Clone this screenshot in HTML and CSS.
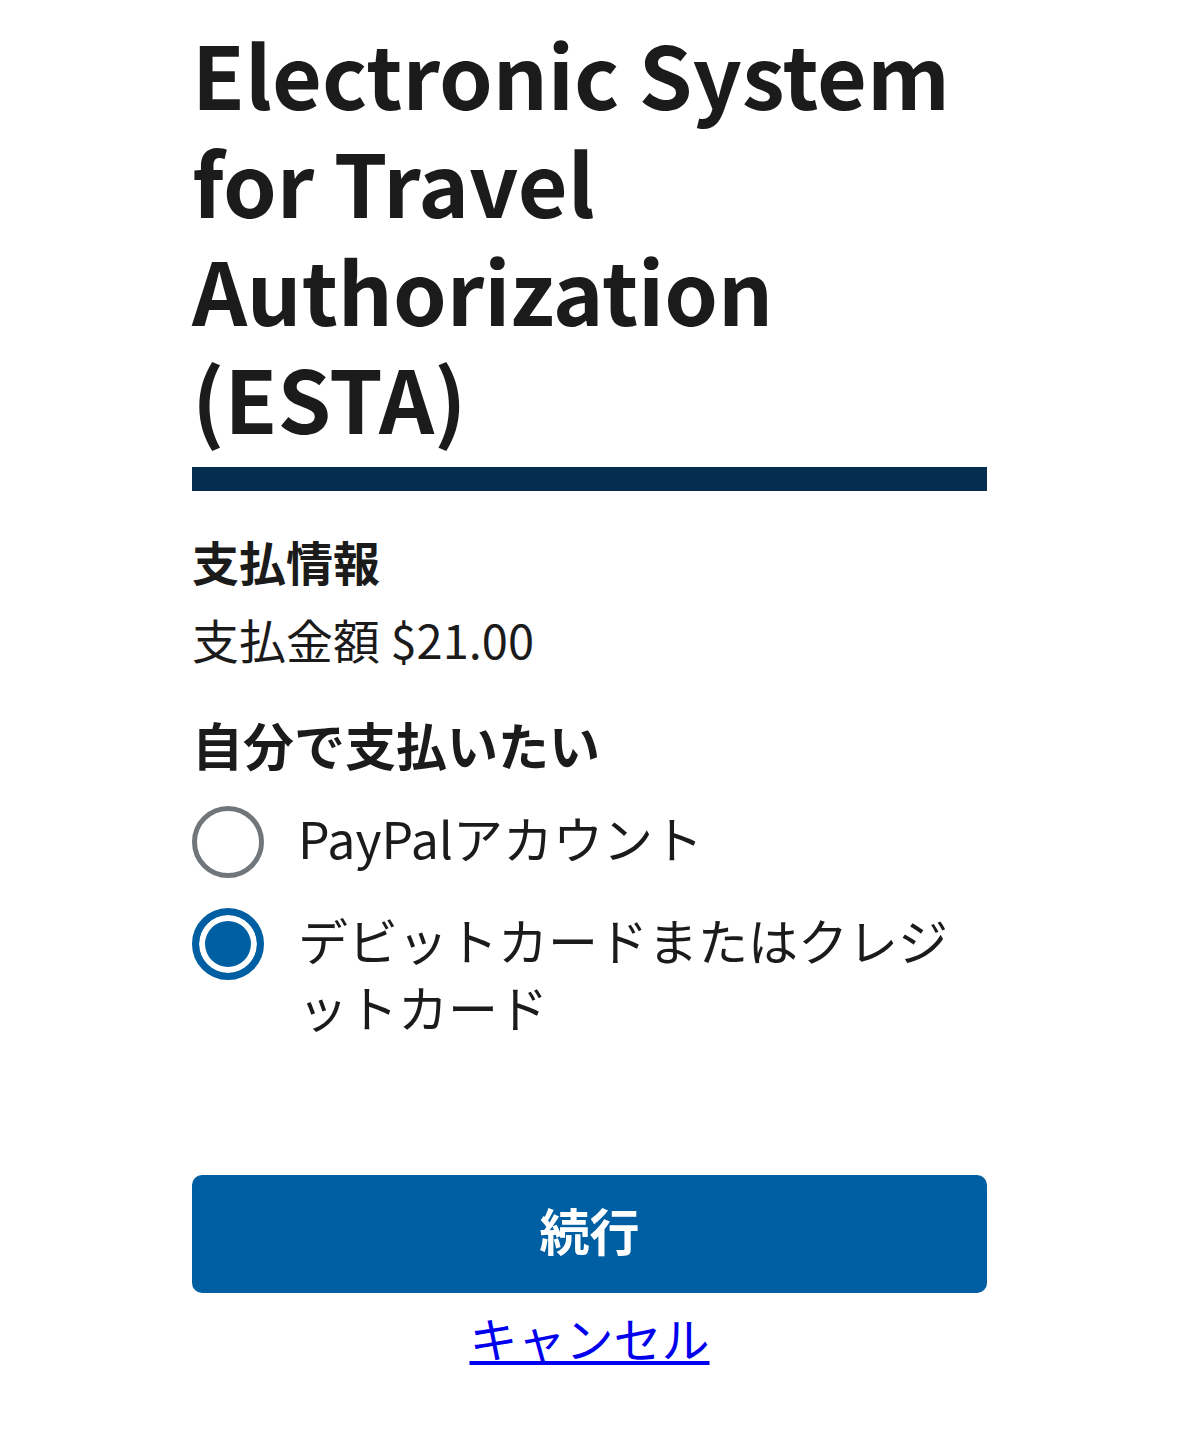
FILE: index.html
```html
<!DOCTYPE html>
<html lang="ja">
<head>
    <meta charset="UTF-8">
    <meta name="viewport" content="width=device-width, initial-scale=1.0">
    <title>ESTA 支払情報</title>
    <link rel="stylesheet" href="styles.css">
</head>
<body>

    <main class="page">
        <h1 class="title">Electronic System for Travel Authorization (ESTA)</h1>
        <div class="title-bar"></div>

        <section class="payment">
            <h2>支払情報</h2>
            <p class="amount">支払金額 $21.00</p>

            <!-- 支払方法 -->
            <fieldset class="pay-method">
                <legend>自分で支払いたい</legend>
                <label class="option">
                    <input type="radio" name="method" value="paypal">
                    <span>PayPalアカウント</span>
                </label>
                <label class="option">
                    <input type="radio" name="method" value="card" checked>
                    <span>デビットカードまたはクレジットカード</span>
                </label>
            </fieldset>
        </section>

        <div class="actions">
            <button class="btn-continue">続行</button>
            <a href="#" class="cancel">キャンセル</a>
        </div>
    </main>

</body>
</html>
```

FILE: styles.css
```css
body {
    font-family: "Noto Sans CJK JP", "Noto Sans", sans-serif;
    margin: 0;
    padding: 0;
    background-color: #fff;
    color: #1b1b1b;
}

.page {
    width: 795px;
    margin: 0 auto;
    padding-top: 19px;
}

.title {
    font-size: 86px;
    line-height: 108px;
    font-weight: 700;
    margin: 0;
}

.title-bar {
    height: 24px;
    background-color: #052d50;
    margin-top: 16px;
}

.payment h2 {
    font-size: 47px;
    line-height: 64px;
    font-weight: 700;
    margin: 38px 0 0;
}

.amount {
    font-size: 47px;
    line-height: 64px;
    margin: 14px 0 0;
}

.pay-method {
    border: none;
    margin: 41px 0 0;
    padding: 0;
}

.pay-method legend {
    padding: 0;
    font-size: 51px;
    line-height: 64px;
    font-weight: 700;
}

.option {
    display: flex;
    align-items: flex-start;
    gap: 34px;
    margin-top: 28px;
    font-size: 50px;
    line-height: 67px;
}

.option + .option {
    margin-top: 28px;
}

.option input {
    appearance: none;
    -webkit-appearance: none;
    flex: none;
    width: 72px;
    height: 72px;
    margin: 0;
    margin-top: 2px;
    border: 5px solid #71767a;
    border-radius: 50%;
    background-color: #fff;
}

.option input:checked {
    border: 7px solid #005ea2;
    background-color: #005ea2;
    box-shadow: inset 0 0 0 6px #fff;
}

.actions {
    margin-top: 135px;
    display: flex;
    flex-direction: column;
    align-items: center;
}

.btn-continue {
    width: 100%;
    height: 118px;
    padding: 0 0 10px;
    background-color: #005ea2;
    color: white;
    border: none;
    border-radius: 10px;
    font-family: inherit;
    font-size: 50px;
    font-weight: 700;
    cursor: pointer;
}

.cancel {
    margin-top: 12px;
    font-size: 48px;
    line-height: 64px;
    color: #0000ee;
}
```
